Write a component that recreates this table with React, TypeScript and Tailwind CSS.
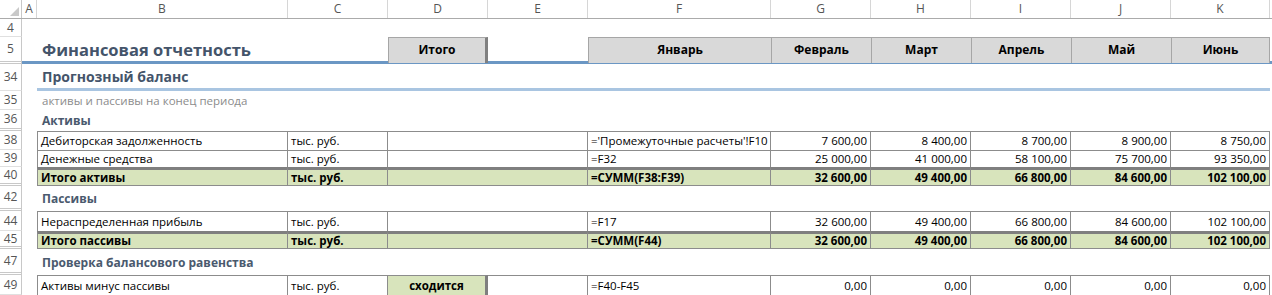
import React from 'react';

// column widths after the row header: A, B, C, D, E, F, G, H, I, J, K
const GRID = 'grid grid-cols-[15px_251px_100px_100px_100px_183px_100px_100px_100px_100px_99px]';
const LETTERS = ['A', 'B', 'C', 'D', 'E', 'F', 'G', 'H', 'I', 'J', 'K'];
const MONTHS = ['Январь', 'Февраль', 'Март', 'Апрель', 'Май', 'Июнь'];

interface Line {
    n: number;
    h: string;
    label: string;
    f: string;
    vals: string[];
    total?: boolean;
    last?: boolean;
    hidden?: boolean;
    check?: string;
}

const assets: Line[] = [
    { n: 38, h: 'h-[19px]', label: 'Дебиторская задолженность', f: "='Промежуточные расчеты'!F10", vals: ['7 600,00', '8 400,00', '8 700,00', '8 900,00', '8 750,00'] },
    { n: 39, h: 'h-[17px]', label: 'Денежные средства', f: '=F32', vals: ['25 000,00', '41 000,00', '58 100,00', '75 700,00', '93 350,00'] },
    { n: 40, h: 'h-[19px]', total: true, last: true, hidden: true, label: 'Итого активы', f: '=СУММ(F38:F39)', vals: ['32 600,00', '49 400,00', '66 800,00', '84 600,00', '102 100,00'] },
];

const liabilities: Line[] = [
    { n: 44, h: 'h-[20px]', label: 'Нераспределенная прибыль', f: '=F17', vals: ['32 600,00', '49 400,00', '66 800,00', '84 600,00', '102 100,00'] },
    { n: 45, h: 'h-[18px]', total: true, last: true, hidden: true, label: 'Итого пассивы', f: '=СУММ(F44)', vals: ['32 600,00', '49 400,00', '66 800,00', '84 600,00', '102 100,00'] },
];

const check: Line = { n: 49, h: 'h-[20px]', label: 'Активы минус пассивы', check: 'сходится', f: '=F40-F45', vals: ['0,00', '0,00', '0,00', '0,00', '0,00'] };

const RowHead: React.FC<{ n: number; hidden?: boolean }> = ({ n, hidden }) => (
    <div
        className={`w-[22px] shrink-0 flex items-center justify-center border-r border-r-[#c8c8c8] text-[12px] text-[#555] ${hidden ? 'border-b-[3px] border-double border-b-[#c8c8c8]' : 'border-b border-b-[#e0e0e0]'}`}
    >
        {n}
    </div>
);

const Row: React.FC<{ n: number; h: string; hidden?: boolean; children?: React.ReactNode }> = ({ n, h, hidden, children }) => (
    <div className={`flex ${h}`}>
        <RowHead n={n} hidden={hidden} />
        <div className="flex-1 min-w-0">{children}</div>
    </div>
);

const TableRow: React.FC<{ line: Line }> = ({ line }) => {
    const edge = `border-r border-[#8c8c8c] ${line.total ? 'border-t-[3px] border-t-[#7f7f7f] bg-[#d8e4bc] font-bold' : 'border-t'} ${line.last ? 'border-b' : ''}`;
    return (
        <Row n={line.n} h={line.h} hidden={line.hidden}>
            <div className={`${GRID} h-full text-[11.5px] text-black leading-none`}>
                <div />
                <div className={`${edge} border-l flex items-center pl-[3px] whitespace-nowrap`}>{line.label}</div>
                <div className={`${edge} flex items-center pl-[3px]`}>тыс. руб.</div>
                {line.check ? (
                    <>
                        <div className={`${edge} border-r-[3px] border-r-[#7f7f7f] bg-[#d8e4bc] font-bold flex items-center justify-center`}>{line.check}</div>
                        <div className={edge} />
                    </>
                ) : (
                    <div className={`${edge} col-span-2`} />
                )}
                <div className={`${edge} flex items-center pl-[3px] whitespace-nowrap`}>{line.f}</div>
                {line.vals.map((v, i) => (
                    <div key={i} className={`${edge} flex items-center justify-end pr-[3px] whitespace-nowrap`}>{v}</div>
                ))}
            </div>
        </Row>
    );
};

const Heading: React.FC<{ n: number; h: string; hidden?: boolean; text: string }> = ({ n, h, hidden, text }) => (
    <Row n={n} h={h} hidden={hidden}>
        <div className={`${GRID} h-full`}>
            <div />
            <div className="flex items-center pl-[5px] pt-[1px] text-[12px] font-bold text-[#4a5a6e] whitespace-nowrap">{text}</div>
        </div>
    </Row>
);

export default function App() {
    return (
        <div className="w-[1272px] h-[295px] overflow-hidden bg-white font-['Open_Sans',sans-serif]">
            {/* column letters */}
            <div className="flex h-[19px] border-b border-[#ababab]">
                <div className="w-[22px] shrink-0 border-r border-[#c8c8c8] flex items-end justify-end p-[2px]">
                    <svg width="9" height="9" viewBox="0 0 9 9">
                        <polygon points="9,0 9,9 0,9" fill="#c9c9c9" />
                    </svg>
                </div>
                <div className={`${GRID} flex-1`}>
                    {LETTERS.map((l) => (
                        <div key={l} className="border-r border-[#d6d6d6] flex items-center justify-center text-[12px] text-[#555]">
                            {l}
                        </div>
                    ))}
                </div>
            </div>

            <Row n={4} h="h-[18px]" />

            <Row n={5} h="h-[27px]" hidden>
                <div className={`${GRID} h-full border-b-[3px] border-b-[#6b97c4]`}>
                    <div />
                    <div className="flex items-center pl-[5px] pt-[1px] text-[16.5px] font-bold text-[#44546a] whitespace-nowrap">Финансовая отчетность</div>
                    <div />
                    <div className="bg-[#d9d9d9] border-t border-l border-[#a6a6a6] border-r-[3px] border-r-[#808080] flex items-center justify-center text-[12px] font-bold text-black">
                        Итого
                    </div>
                    <div />
                    {MONTHS.map((m, i) => (
                        <div
                            key={m}
                            className={`bg-[#d9d9d9] border-t border-l border-[#a6a6a6] flex items-center justify-center text-[12px] font-bold text-black ${i === MONTHS.length - 1 ? 'border-r' : ''}`}
                        >
                            {m}
                        </div>
                    ))}
                </div>
            </Row>

            <Row n={34} h="h-[27px]">
                <div className={`${GRID} h-full`}>
                    <div />
                    <div className="col-span-10 flex items-center pl-[5px] pt-[1px] border-b-[3px] border-b-[#a9c5e1] text-[14px] font-bold text-[#44546a]">
                        Прогнозный баланс
                    </div>
                </div>
            </Row>

            <Row n={35} h="h-[19px]">
                <div className={`${GRID} h-full`}>
                    <div />
                    <div className="flex items-center pl-[5px] text-[11.5px] text-[#8c8c8c] whitespace-nowrap">активы и пассивы на конец периода</div>
                </div>
            </Row>

            <Heading n={36} h="h-[21px]" hidden text="Активы" />
            {assets.map((l) => (
                <TableRow key={l.n} line={l} />
            ))}

            <Heading n={42} h="h-[25px]" hidden text="Пассивы" />
            {liabilities.map((l) => (
                <TableRow key={l.n} line={l} />
            ))}

            <Heading n={47} h="h-[26px]" hidden text="Проверка балансового равенства" />
            <TableRow line={check} />
        </div>
    );
}
